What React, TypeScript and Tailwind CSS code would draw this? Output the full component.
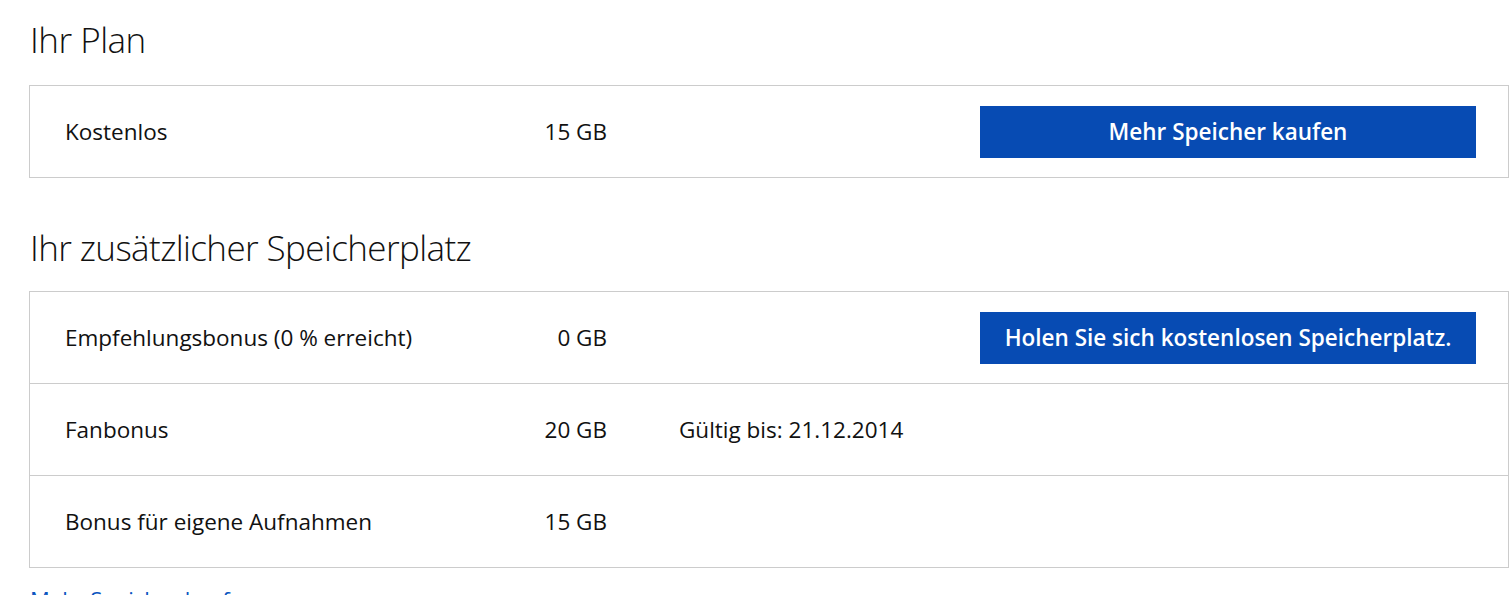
import type { ReactNode } from "react";

const font = { fontFamily: '"Open Sans", "Noto Sans", sans-serif' };

function Row({
    label,
    size,
    note,
    action,
    first,
}: {
    label: string;
    size: string;
    note?: string;
    action?: ReactNode;
    first?: boolean;
}) {
    return (
        <div
            className={`flex items-center pl-[35px] pr-[32px] ${first ? "h-[91px]" : "h-[92px] border-t border-[#cccccc]"}`}
        >
            <div className="flex w-[542px] items-center justify-between text-[22.5px] text-[#111]">
                <span>{label}</span>
                <span>{size}</span>
            </div>
            {note && (
                <span className="ml-[72px] text-[22.5px] text-[#111]">
                    {note}
                </span>
            )}
            <div className="flex-1" />
            {action}
        </div>
    );
}

function BlueButton({ children }: { children: ReactNode }) {
    return (
        <button
            className="h-[52px] w-[496px] bg-[#074bb3] text-[22.5px] font-semibold text-white"
            type="button"
        >
            {children}
        </button>
    );
}

export default function App() {
    return (
        <div className="h-[595px] overflow-hidden bg-white pr-[2px] pl-[29px]" style={font}>
            <h1 className="pt-[18px] pl-[1px] text-[35px] leading-[44px] font-light tracking-[-0.5px] text-[#111]">
                Ihr Plan
            </h1>
            <div className="mt-[23px] border border-[#cccccc]">
                <Row
                    action={<BlueButton>Mehr Speicher kaufen</BlueButton>}
                    first
                    label="Kostenlos"
                    size="15 GB"
                />
            </div>
            <h2 className="mt-[48px] pl-[1px] text-[35px] leading-[44px] font-light tracking-[-0.6px] text-[#111]">
                Ihr zusätzlicher Speicherplatz
            </h2>
            <div className="mt-[21px] border border-[#cccccc]">
                <Row
                    action={
                        <BlueButton>
                            Holen Sie sich kostenlosen Speicherplatz.
                        </BlueButton>
                    }
                    first
                    label="Empfehlungsbonus (0 % erreicht)"
                    size="0 GB"
                />
                <Row label="Fanbonus" note="Gültig bis: 21.12.2014" size="20 GB" />
                <Row label="Bonus für eigene Aufnahmen" size="15 GB" />
            </div>
            <a
                className="mt-[17px] block pl-[1px] text-[22px] leading-[28px] text-[#0a55c0]"
                href="#"
            >
                Mehr Speicher kaufen
            </a>
        </div>
    );
}
